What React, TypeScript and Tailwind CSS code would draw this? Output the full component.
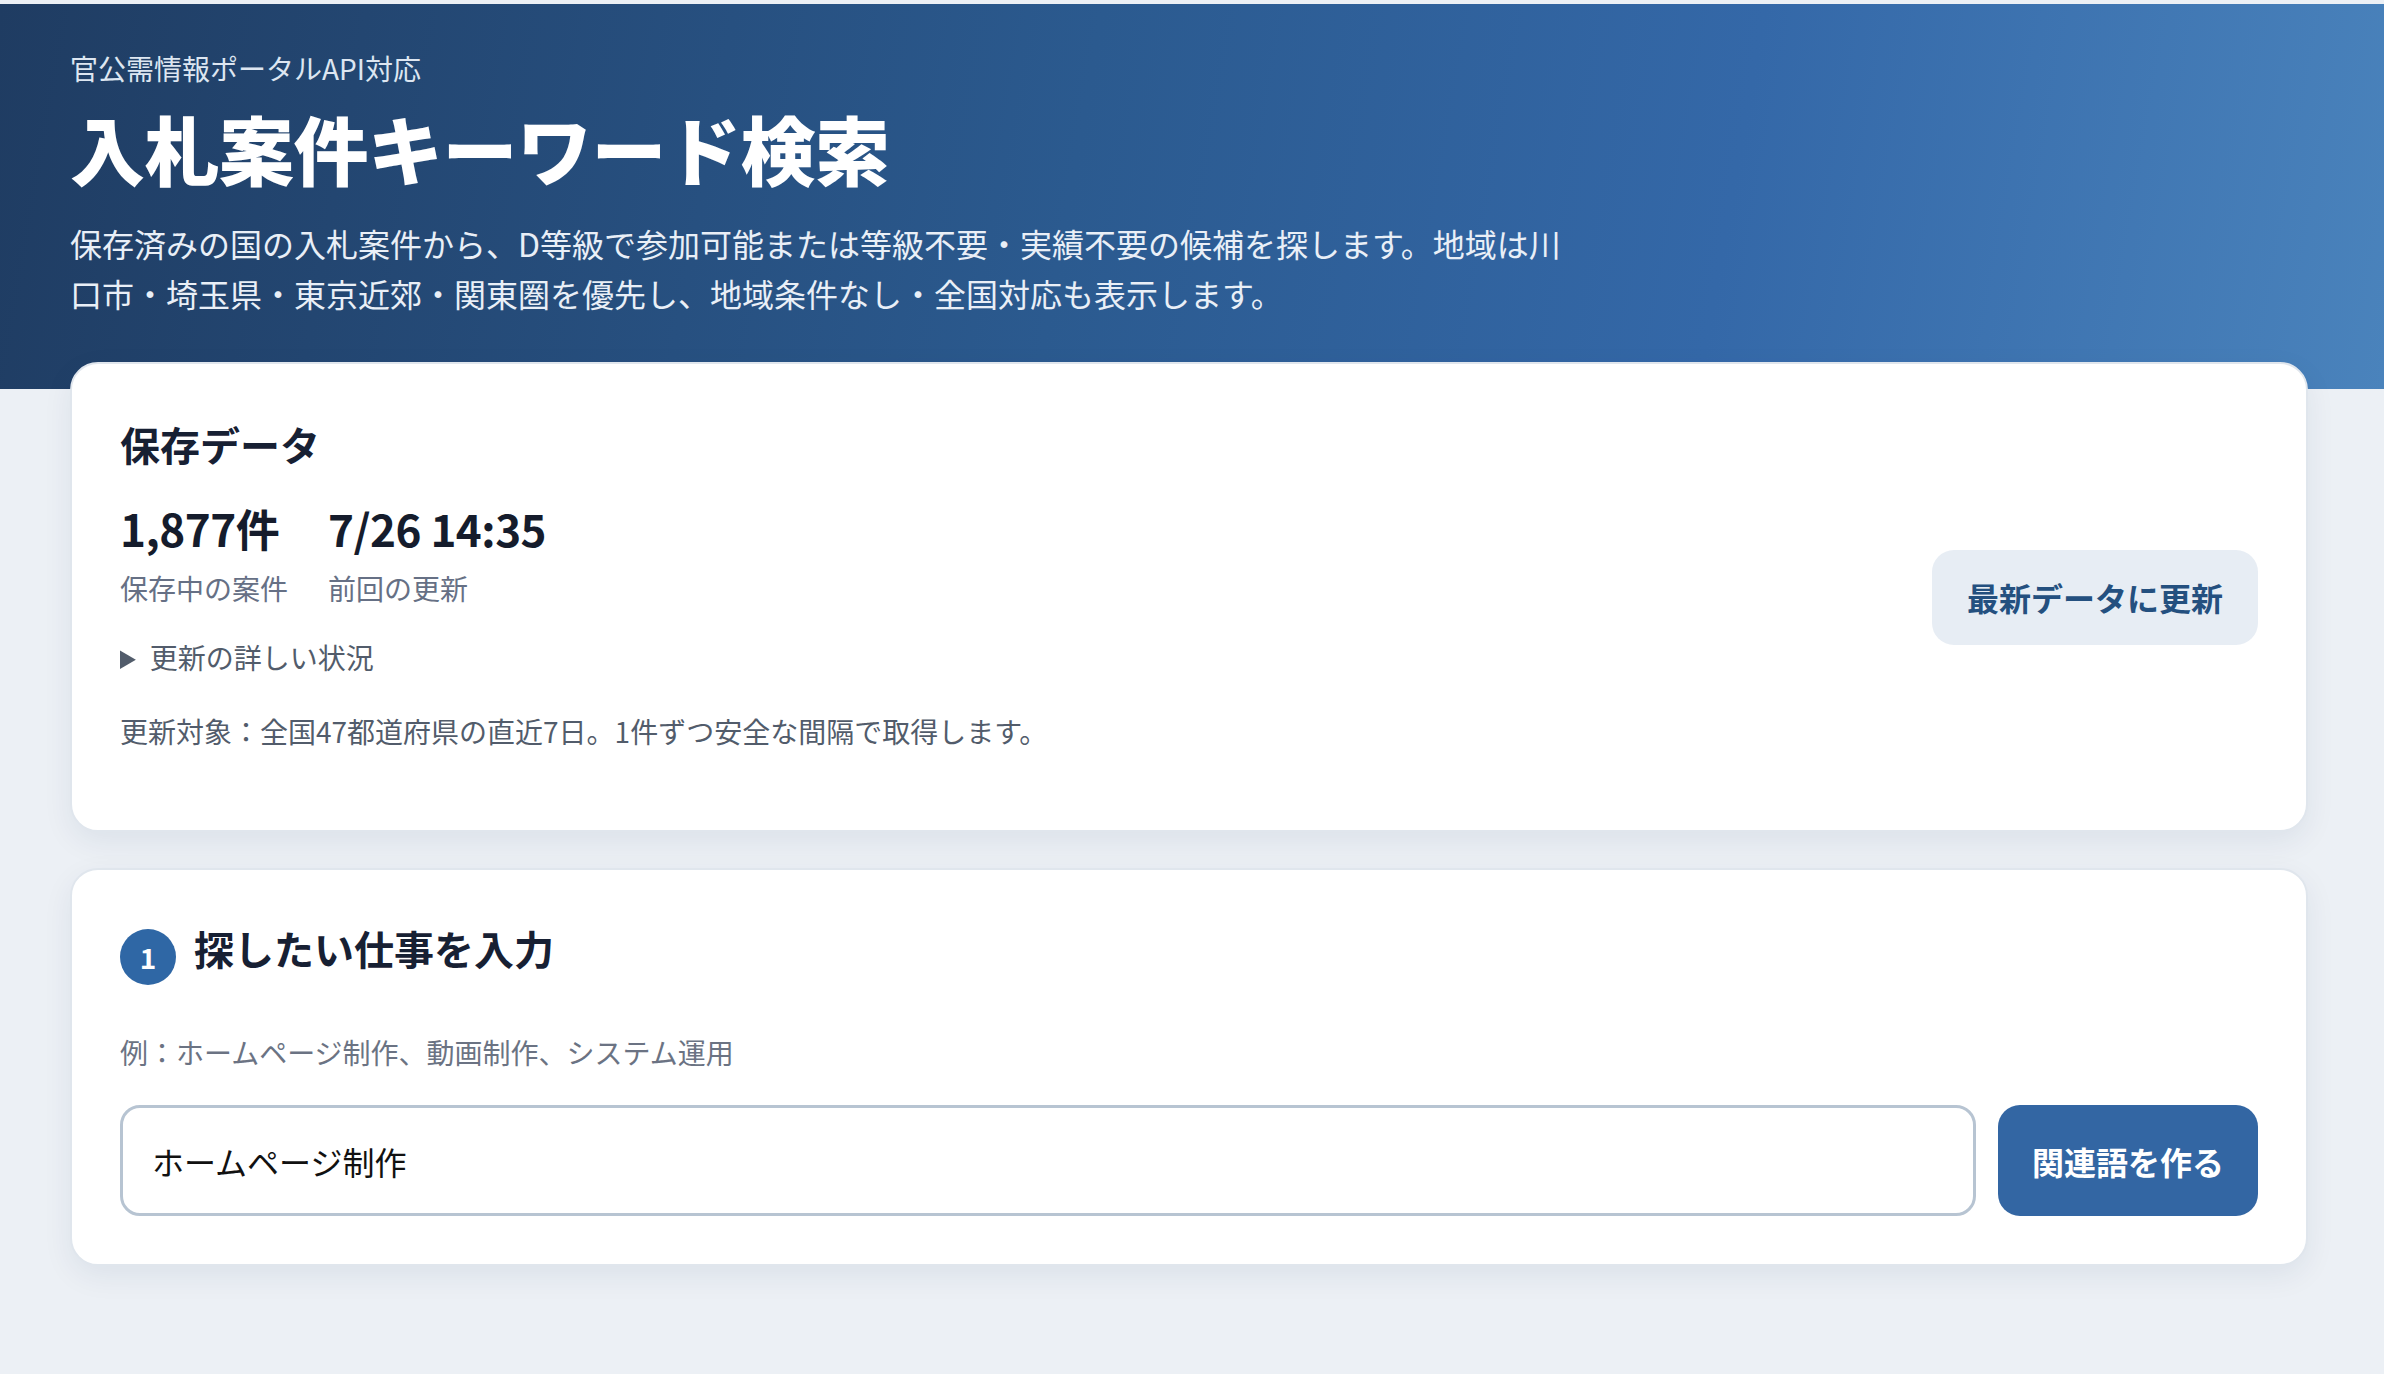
import { useState } from "react";

interface Stat {
    value: string;
    label: string;
}

const stats: Stat[] = [
    { value: "1,877件", label: "保存中の案件" },
    { value: "7/26 14:35", label: "前回の更新" },
];

export default function App() {
    const [keyword, setKeyword] = useState("ホームページ制作");

    return (
        <div className="min-h-screen bg-[#ecf0f5] pt-[4px] font-['Noto_Sans_CJK_JP','Noto_Sans',sans-serif] text-[#172033]">
            {/* Hero */}
            <header className="bg-[linear-gradient(100deg,#1f3c62_0%,#2b5a8f_45%,#3468a8_72%,#4a83bc_100%)] pl-[70px] pr-[76px] pt-[43px] pb-[71px]">
                <p className="text-[28px] leading-[42px] text-[#dde6f1]">官公需情報ポータルAPI対応</p>
                <h1 className="mt-[14px] text-[75px] font-black leading-[90px] tracking-[-0.5px] text-white">
                    入札案件キーワード検索
                </h1>
                <p className="mt-[25px] max-w-[1510px] text-[32px] leading-[50px] text-[#e9eff7]">
                    保存済みの国の入札案件から、D等級で参加可能または等級不要・実績不要の候補を探します。地域は川口市・埼玉県・東京近郊・関東圏を優先し、地域条件なし・全国対応も表示します。
                </p>
            </header>

            <main className="relative -mt-[27px] pl-[70px] pr-[76px] pb-[80px]">
                {/* Saved data card */}
                <section className="flex items-center justify-between rounded-[28px] border-2 border-[#e0e6ed] bg-white px-12 pt-[52px] pb-[52px] shadow-[0_10px_30px_rgba(20,45,80,0.07)]">
                    <div>
                        <h2 className="text-[40px] font-bold leading-[56px]">保存データ</h2>
                        <div className="mt-[30px] flex gap-10">
                            {stats.map((stat) => (
                                <div key={stat.label} className="flex flex-col">
                                    <span className="text-[44px] font-bold leading-[53px] tracking-[-0.5px] text-[#151c2c]">
                                        {stat.value}
                                    </span>
                                    <span className="mt-3 text-[28px] leading-[42px] text-[#667085]">{stat.label}</span>
                                </div>
                            ))}
                        </div>
                        <details className="mt-[27px] text-[28px] leading-[42px] text-[#525c6b]">
                            <summary className="cursor-pointer">更新の詳しい状況</summary>
                        </details>
                        <p className="mt-8 mb-[26px] text-[28px] leading-[42px] text-[#525c6b]">
                            更新対象：全国47都道府県の直近7日。1件ずつ安全な間隔で取得します。
                        </p>
                    </div>
                    <button className="h-[95px] rounded-[22px] bg-[#e7edf4] px-[35px] text-[32px] font-bold text-[#24507f]">
                        最新データに更新
                    </button>
                </section>

                {/* Step 1 card */}
                <section className="mt-[36px] rounded-[28px] border-2 border-[#e0e6ed] bg-white px-12 pt-[50px] pb-12 shadow-[0_10px_30px_rgba(20,45,80,0.07)]">
                    <div className="flex items-start gap-[18px]">
                        <span className="mt-[9px] flex h-[56px] w-[56px] items-center justify-center rounded-full bg-[#2f67a5] text-[28px] font-bold text-white">
                            1
                        </span>
                        <h2 className="text-[40px] font-bold leading-[56px]">探したい仕事を入力</h2>
                    </div>
                    <p className="mt-[46px] text-[28px] leading-[42px] text-[#6b7383]">
                        例：ホームページ制作、動画制作、システム運用
                    </p>
                    <div className="mt-8 flex gap-[22px]">
                        <input
                            value={keyword}
                            onChange={(e) => setKeyword(e.target.value)}
                            className="h-[111px] flex-1 rounded-[20px] border-[3px] border-[#b7c4d2] bg-white px-[29px] text-[32px] text-[#111111] outline-none"
                        />
                        <button className="h-[111px] w-[260px] rounded-[22px] bg-[#3366a3] text-[32px] font-bold text-white">
                            関連語を作る
                        </button>
                    </div>
                </section>
            </main>
        </div>
    );
}
